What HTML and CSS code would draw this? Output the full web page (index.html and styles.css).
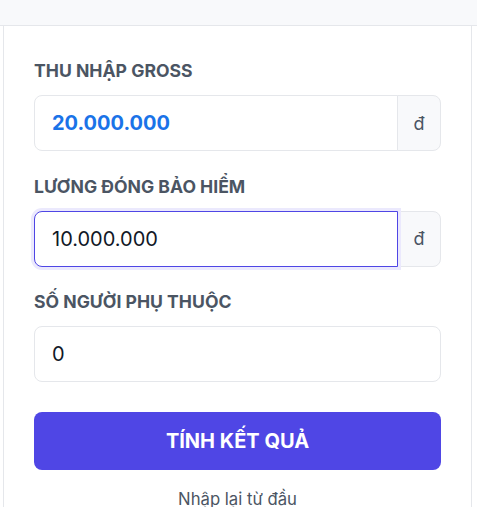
FILE: index.html
```html
<!DOCTYPE html>
<html lang="vi">
<head>
<meta charset="utf-8">
<title>Tính lương</title>
<link rel="stylesheet" href="styles.css">
</head>
<body>
<div class="topbar"></div>
<div class="card">
  <div class="field">
    <label class="label">THU NHẬP GROSS</label>
    <div class="group">
      <div class="input input-strong">20.000.000</div>
      <div class="suffix">đ</div>
    </div>
  </div>
  <div class="field">
    <label class="label">LƯƠNG ĐÓNG BẢO HIỂM</label>
    <div class="group">
      <div class="input input-focus">10.000.000</div>
      <div class="suffix">đ</div>
    </div>
  </div>
  <div class="field">
    <label class="label">SỐ NGƯỜI PHỤ THUỘC</label>
    <div class="group">
      <div class="input input-single">0</div>
    </div>
  </div>
  <button class="btn">TÍNH KẾT QUẢ</button>
  <div class="reset">Nhập lại từ đầu</div>
</div>
</body>
</html>
```

FILE: styles.css
```css
* { box-sizing: border-box; }
html, body { margin: 0; padding: 0; background: #ffffff; }
body { font-family: Inter, "Noto Sans", sans-serif; color: #111827; }

.topbar {
  height: 26px;
  background: #f8f9fb;
  border-bottom: 1px solid #e5e7eb;
}

.card {
  margin-left: 3px;
  width: 469px;
  border-left: 1px solid #e5e7eb;
  border-right: 1px solid #e5e7eb;
  padding: 34px 30px 0 30px;
  display: flex;
  flex-direction: column;
  min-height: 481px;
}

.field {
  display: flex;
  flex-direction: column;
  margin-bottom: 24.5px;
}

.label {
  font-size: 17.6px;
  line-height: 22px;
  font-weight: 700;
  color: #4b5563;
  margin-bottom: 13px;
}

.group {
  display: flex;
  height: 56px;
}

.input {
  flex: 1;
  display: flex;
  align-items: center;
  padding-left: 17px;
  border: 1px solid #e5e7eb;
  border-radius: 8px 0 0 8px;
  margin-right: -1px;
  font-size: 20px;
  color: #111827;
  background: #fff;
  position: relative;
}

.input-strong {
  font-weight: 700;
  color: #1a73e8;
  font-size: 20px;
}

.input-focus {
  border-color: #4f46e5;
  box-shadow: 0 0 0 3px #ebe9fd;
  z-index: 1;
}

.input-single {
  border-radius: 8px;
  margin-right: 0;
}

.suffix {
  width: 44px;
  display: flex;
  align-items: center;
  justify-content: center;
  background: #f8f9fb;
  border: 1px solid #e5e7eb;
  border-radius: 0 8px 8px 0;
  font-size: 18px;
  color: #4b5563;
}

.btn {
  margin-top: 5px;
  height: 58px;
  border: none;
  border-radius: 8px;
  background: #4f46e5;
  color: #ffffff;
  font-family: Inter, "Noto Sans", sans-serif;
  font-size: 20px;
  font-weight: 700;
}

.reset {
  margin-top: 19px;
  text-align: center;
  font-size: 16.7px;
  color: #4b5563;
}
```
